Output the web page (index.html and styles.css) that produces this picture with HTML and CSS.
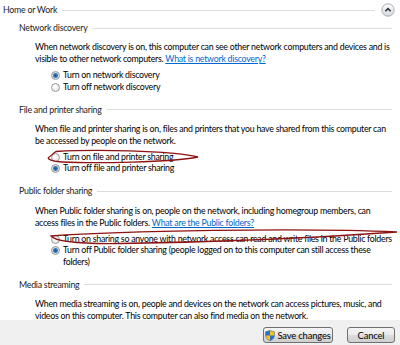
FILE: index.html
```html
<!DOCTYPE html>
<html lang="en">
<head>
    <meta charset="UTF-8">
    <title>Advanced sharing settings</title>
    <link rel="stylesheet" href="styles.css">
</head>
<body>

<div class="panel">
    <div class="profile-head">
        <span class="profile-title">Home or Work</span>
        <span class="rule"></span>
        <span class="collapse-btn">
            <svg width="14" height="14" viewBox="0 0 14 14">
                <defs>
                    <linearGradient id="btnGrad" x1="0" y1="0" x2="0" y2="1">
                        <stop offset="0" stop-color="#ffffff"/>
                        <stop offset="1" stop-color="#d4d8dd"/>
                    </linearGradient>
                </defs>
                <circle cx="7" cy="7" r="6.2" fill="url(#btnGrad)" stroke="#9ea4ab" stroke-width="0.9"/>
                <path d="M4.3 8.3 L7 5.6 L9.7 8.3" fill="none" stroke="#2c3440" stroke-width="1.6"/>
            </svg>
        </span>
    </div>

    <!-- Network discovery -->
    <div class="section">
        <div class="section-head"><span>Network discovery</span><span class="rule"></span></div>
        <p class="desc">When network discovery is on, this computer can see other network computers and devices and is<br>visible to other network computers. <a href="#">What is network discovery?</a></p>
        <div class="options">
            <label class="option"><span class="radio checked"></span>Turn on network discovery</label>
            <label class="option"><span class="radio"></span>Turn off network discovery</label>
        </div>
    </div>

    <!-- File and printer sharing -->
    <div class="section">
        <div class="section-head"><span>File and printer sharing</span><span class="rule"></span></div>
        <p class="desc">When file and printer sharing is on, files and printers that you have shared from this computer can<br>be accessed by people on the network.</p>
        <div class="options">
            <label class="option"><span class="radio"></span>Turn on file and printer sharing</label>
            <label class="option"><span class="radio checked"></span>Turn off file and printer sharing</label>
        </div>
    </div>

    <!-- Public folder sharing -->
    <div class="section">
        <div class="section-head"><span>Public folder sharing</span><span class="rule"></span></div>
        <p class="desc">When Public folder sharing is on, people on the network, including homegroup members, can<br>access files in the Public folders. <a href="#">What are the Public folders?</a></p>
        <div class="options">
            <label class="option"><span class="radio"></span>Turn on sharing so anyone with network access can read and write files in the Public folders</label>
            <label class="option"><span class="radio checked"></span>Turn off Public folder sharing (people logged on to this computer can still access these<br>folders)</label>
        </div>
    </div>

    <!-- Media streaming -->
    <div class="section">
        <div class="section-head"><span>Media streaming</span><span class="rule"></span></div>
        <p class="desc">When media streaming is on, people and devices on the network can access pictures, music, and<br>videos on this computer. This computer can also find media on the network.</p>
    </div>

    <!-- hand-drawn marks over the screenshot -->
    <svg class="marks" width="400" height="320" viewBox="0 0 400 320">
        <path d="M56 151.5 C90 149.5 170 150 198 157 C170 162.5 95 163.5 62 162 C52 161.5 47 159 48.5 157.5 C51 156 53 153.5 56 151.5 Z" fill="none" stroke="#8e1212" stroke-width="1.3"/>
        <path d="M51 236 C120 231 300 227.5 397 232 C320 237.5 230 242 120 243.5 C80 244 56 242 51 236 Z" fill="none" stroke="#8e1212" stroke-width="1.3"/>
    </svg>
</div>

<div class="footer">
    <button type="button" class="btn">
        <svg width="10" height="11" viewBox="0 0 10 11">
            <path d="M5 0.5 L9.5 1.8 L9.5 5 C9.5 8 7.5 9.7 5 10.7 C2.5 9.7 0.5 8 0.5 5 L0.5 1.8 Z" fill="#f2c21d" stroke="#5d6b86" stroke-width="0.6"/>
            <path d="M5 0.5 L0.5 1.8 L0.5 5.4 L5 5.4 Z" fill="#2f6fcc"/>
            <path d="M5 5.4 L9.5 5.4 C9.3 8 7.5 9.7 5 10.7 Z" fill="#2f6fcc"/>
        </svg>
        Save changes
    </button>
    <button type="button" class="btn cancel-btn">Cancel</button>
</div>

</body>
</html>
```

FILE: styles.css
```css
body {
    font-family: Lato, "Noto Sans", sans-serif;
    font-size: 8.8px;
    letter-spacing: -0.25px;
    color: #000;
    background-color: #fff;
    margin: 0;
    width: 400px;
    height: 345px;
    overflow: hidden;
}

.panel {
    position: relative;
    height: 320px;
    overflow: hidden;
    padding: 4px 8px 0 3px;
    box-sizing: border-box;
}

.profile-head {
    display: flex;
    align-items: center;
    height: 12px;
    line-height: 12px;
}

.profile-title {
    color: #1c1c1c;
}

.rule {
    flex: 1;
    border-top: 1px solid #dcdcdc;
    margin-left: 5px;
}

.profile-head .rule {
    margin-right: 6px;
}

.collapse-btn {
    display: flex;
    margin-right: -3px;
}

.section {
    padding-left: 16px;
}

.section-head {
    display: flex;
    align-items: center;
    height: 12px;
    line-height: 12px;
    margin-top: 6px;
    color: #1c1c1c;
}

.section + .section .section-head {
    margin-top: 11.5px;
}

.desc {
    margin: 7px 0 0 16px;
    line-height: 12px;
    white-space: nowrap;
}

.desc a {
    color: #0066cc;
}

.options {
    display: flex;
    flex-direction: column;
    margin: 4px 0 0 32px;
}

.option {
    display: block;
    line-height: 11.5px;
    padding-left: 12px;
    position: relative;
    white-space: nowrap;
}

.section:nth-child(4) .desc {
    margin-top: 8px;
}

.section:nth-child(4) .options {
    margin-top: 3.5px;
}

.radio {
    position: absolute;
    left: 0;
    top: 2px;
    width: 7px;
    height: 7px;
    border: 1px solid #9a9a9a;
    border-radius: 50%;
    background: radial-gradient(circle at 40% 35%, #ffffff, #e0e0e0);
}

.radio.checked {
    background: radial-gradient(circle at 50% 50%, #1f4e7e 0, #3b7fbf 2px, #cfdce8 3px, #f0f0f0 4px);
}

.marks {
    position: absolute;
    left: 0;
    top: 0;
}

.footer {
    height: 25px;
    background-color: #f0f0f0;
    display: flex;
    justify-content: flex-end;
    align-items: flex-start;
    gap: 14px;
    padding: 7px 5px 0 0;
    box-sizing: border-box;
}

.btn {
    display: flex;
    align-items: center;
    justify-content: center;
    gap: 2px;
    width: 70px;
    height: 16px;
    padding: 0;
    font-family: Lato, "Noto Sans", sans-serif;
    font-size: 9.4px;
    letter-spacing: -0.15px;
    white-space: nowrap;
    color: #000;
    border: 1px solid #707070;
    border-radius: 3px;
    background: linear-gradient(#f4f4f4, #ebebeb 50%, #dddddd 51%, #cfcfcf);
}

.cancel-btn {
    width: 48px;
}
```
